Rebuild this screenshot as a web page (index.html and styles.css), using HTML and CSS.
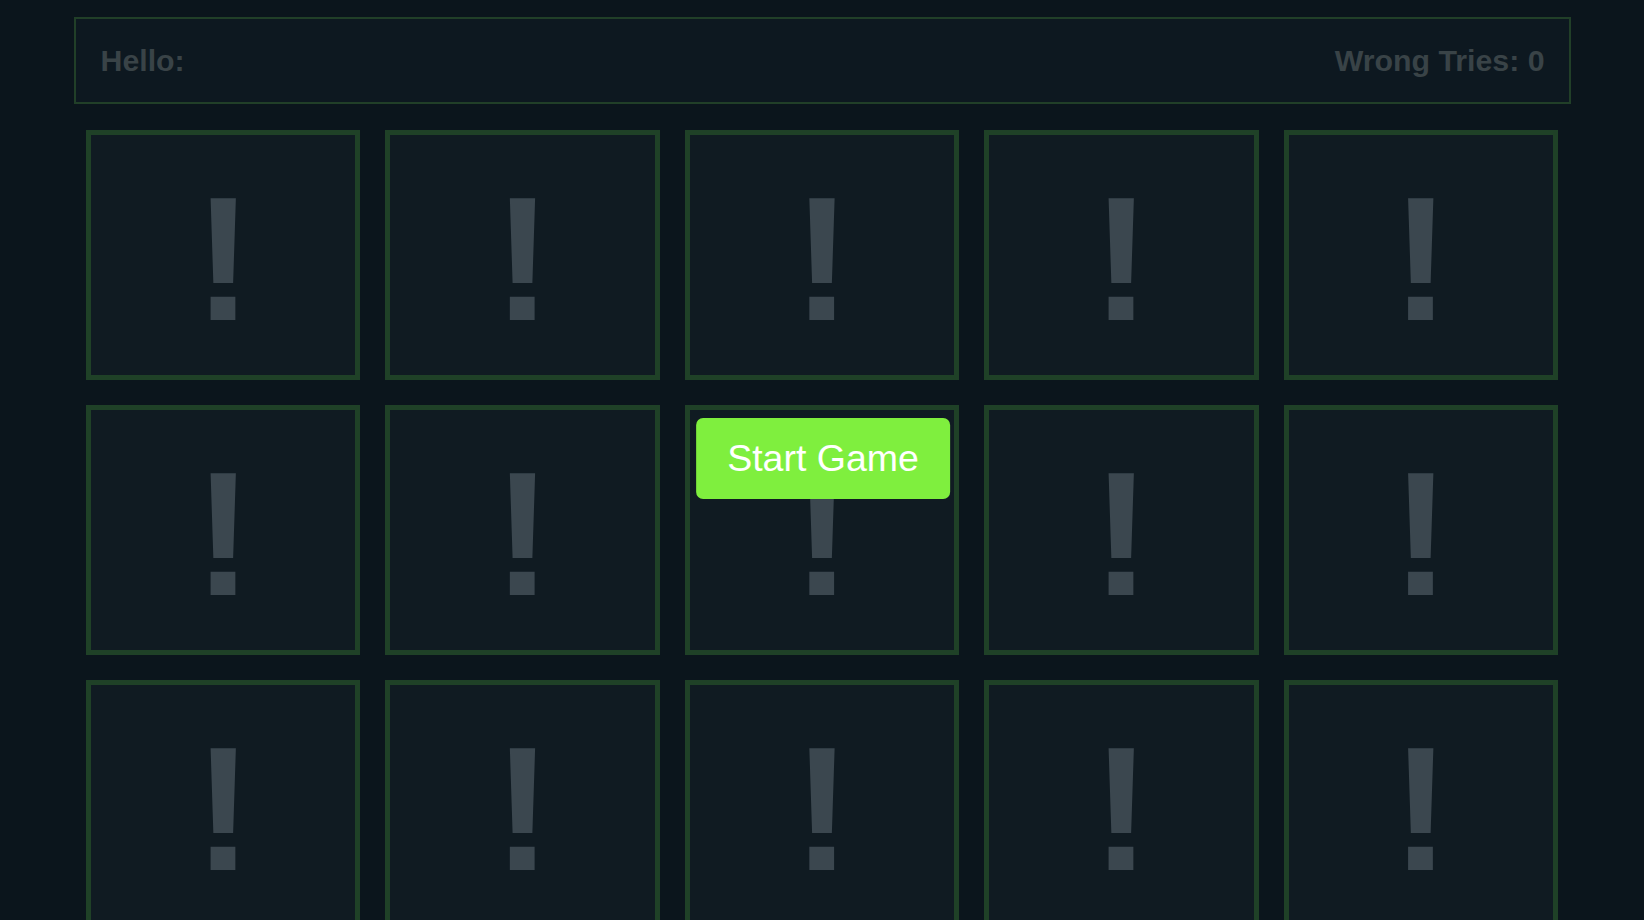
FILE: index.html
```html
<!DOCTYPE html>
<html lang="en">
<head>
<meta charset="utf-8">
<title>Memory Game</title>
<link rel="stylesheet" href="styles.css">
</head>
<body>
<div class="page">
  <header class="info">
    <span class="hello">Hello:</span>
    <span class="tries">Wrong Tries: 0</span>
  </header>
  <main class="board">
    <div class="card"><span class="mark">!</span></div>
    <div class="card"><span class="mark">!</span></div>
    <div class="card"><span class="mark">!</span></div>
    <div class="card"><span class="mark">!</span></div>
    <div class="card"><span class="mark">!</span></div>
    <div class="card"><span class="mark">!</span></div>
    <div class="card"><span class="mark">!</span></div>
    <div class="card"><span class="mark">!</span></div>
    <div class="card"><span class="mark">!</span></div>
    <div class="card"><span class="mark">!</span></div>
    <div class="card"><span class="mark">!</span></div>
    <div class="card"><span class="mark">!</span></div>
    <div class="card"><span class="mark">!</span></div>
    <div class="card"><span class="mark">!</span></div>
    <div class="card"><span class="mark">!</span></div>
  </main>
</div>
<button class="start">Start Game</button>
</body>
</html>
```
FILE: styles.css
```css
html, body {
  margin: 0;
  padding: 0;
  background: #0b151c;
  font-family: "Liberation Sans", Arial, sans-serif;
}

.page {
  width: 1497px;
  margin: 17px auto 0;
}

.info {
  box-sizing: border-box;
  height: 87px;
  border: 2px solid #213f28;
  background: #0d1820;
  padding: 0 24px 0 25px;
  display: flex;
  justify-content: space-between;
  align-items: center;
  color: #394347;
  font-weight: bold;
  font-size: 30.3px;
}

.board {
  margin-top: 26px;
  padding: 0 12.5px;
  display: grid;
  grid-template-columns: repeat(5, 1fr);
  gap: 25px;
}

.card {
  box-sizing: border-box;
  height: 250px;
  border: 5px solid #1f4127;
  background: #101b22;
  display: flex;
  justify-content: center;
  align-items: center;
  padding-top: 9px;
}

.mark {
  font-size: 176px;
  font-weight: bold;
  color: #3b474f;
  line-height: 1.15;
}

.start {
  position: absolute;
  top: 418px;
  left: 50%;
  transform: translateX(-50%);
  margin-left: 1px;
  background: #7fef3e;
  color: #ffffff;
  border: none;
  border-radius: 7px;
  padding: 19px 31px;
  font-family: "Liberation Sans", Arial, sans-serif;
  font-size: 37.5px;
  line-height: 1.15;
}
```
